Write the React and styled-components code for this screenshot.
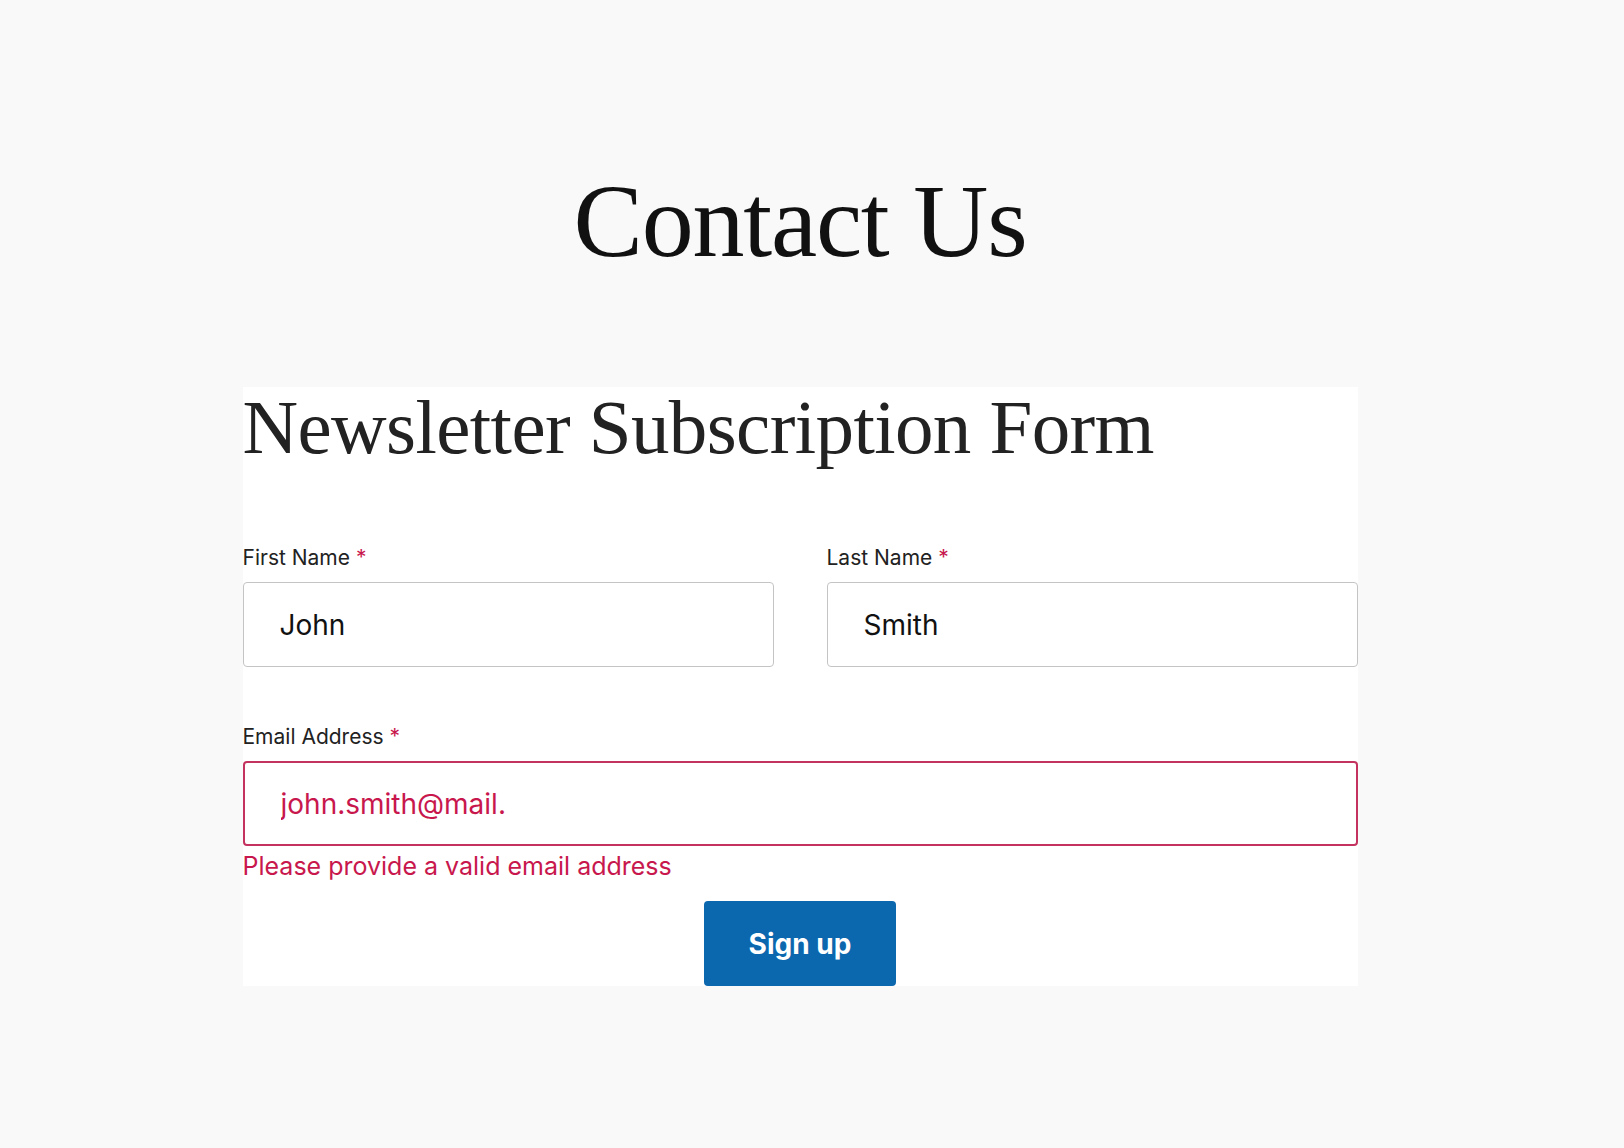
import React, { useState } from 'react';
import styled, { createGlobalStyle } from 'styled-components';

const GlobalStyle = createGlobalStyle`
    body {
        margin:0;
        background:#f9f9f9;
        font-family:Inter, "Noto Sans", sans-serif;
    }
`

const App = () => {
    const [first, setFirst] = useState('John');
    const [last, setLast] = useState('Smith');
    const [email, setEmail] = useState('john.smith@mail.');

    return(
        <Page>
            <GlobalStyle />
            <PageTitle>Contact Us</PageTitle>
            <FormCard>
                <FormTitle>Newsletter Subscription Form</FormTitle>
                <FieldRow>
                    <Field>
                        <Label>First Name <Required>*</Required></Label>
                        <Input value={first} onChange={e => setFirst(e.target.value)} />
                    </Field>
                    <Field>
                        <Label>Last Name <Required>*</Required></Label>
                        <Input value={last} onChange={e => setLast(e.target.value)} />
                    </Field>
                </FieldRow>
                <Field className='email'>
                    <Label>Email Address <Required>*</Required></Label>
                    <Input invalid value={email} onChange={e => setEmail(e.target.value)} />
                    <ErrorText>Please provide a valid email address</ErrorText>
                </Field>
                <SubmitButton type="button">Sign up</SubmitButton>
            </FormCard>
        </Page>
    )
}

export default App;

const Page = styled.div`
    box-sizing:border-box;
    width:1600px;
    min-height:1148px;
    padding-top:169px;
    display:flex;
    flex-direction:column;
    align-items:center;
`
const PageTitle = styled.h1`
    margin:0;
    font-family:"Liberation Serif", serif;
    font-weight:normal;
    font-size:104px;
    line-height:1;
    color:#111;
    letter-spacing:-1.2px;
`
const FormCard = styled.form`
    box-sizing:border-box;
    width:1115px;
    margin-top:114px;
    background:#fff;
    display:flex;
    flex-direction:column;
`
const FormTitle = styled.h2`
    margin:2px 0 0;
    font-family:"Liberation Serif", serif;
    font-weight:normal;
    font-size:77px;
    line-height:1;
    color:#222;
    letter-spacing:-0.6px;
`
const FieldRow = styled.div`
    display:grid;
    grid-template-columns:1fr 1fr;
    gap:53px;
    margin-top:80px;
`
const Field = styled.div`
    display:flex;
    flex-direction:column;
    &.email {
        margin-top:58px;
    }
`
const Label = styled.label`
    font-size:21px;
    line-height:24px;
    color:#222;
    margin-bottom:12px;
`
const Required = styled.span`
    color:#c8174d;
`
const Input = styled.input`
    box-sizing:border-box;
    height:85px;
    padding:0 36px;
    border:${p => p.invalid ? '2px solid #c4325f' : '1px solid #c4c4c4'};
    border-radius:4px;
    font-family:Inter, sans-serif;
    font-size:28px;
    color:${p => p.invalid ? '#c8174d' : '#111'};
    background:#fff;
    outline:none;
`
const ErrorText = styled.div`
    margin-top:6px;
    font-size:25px;
    line-height:29px;
    color:#c8174d;
`
const SubmitButton = styled.button`
    align-self:center;
    width:192px;
    height:85px;
    margin-top:20px;
    border:none;
    border-radius:4px;
    background:#0b67ae;
    color:#fff;
    font-family:Inter, sans-serif;
    font-weight:700;
    font-size:28px;
    cursor:pointer;
`
